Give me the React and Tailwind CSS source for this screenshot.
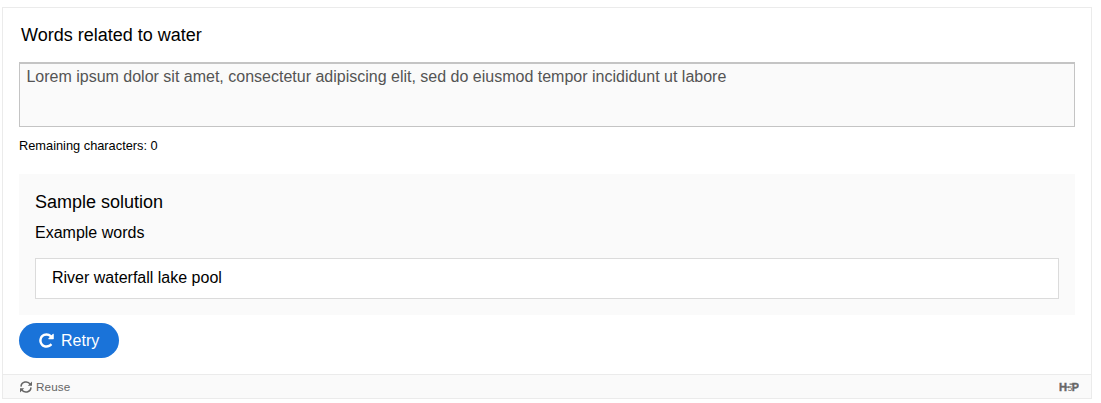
function RetryIcon() {
  return (
    <svg className="size-[17px]" viewBox="0 0 1792 1792" fill="currentColor" aria-hidden="true">
      <path d="M1664 256v448q0 26-19 45t-45 19h-448q-42 0-59-40-17-39 14-69l138-138q-148-137-349-137-104 0-198.500 40.500t-163.500 109.500-109.500 163.500-40.500 198.500 40.500 198.500 109.500 163.500 163.500 109.500 198.500 40.500q119 0 225-52t179-147q7-10 23-12 15 0 25 9l137 138q9 8 9.500 20.500t-7.500 22.500q-109 132-264 204.500t-327 72.500q-156 0-298-61t-245-164-164-245-61-298 61-298 164-245 245-164 298-61q147 0 284.500 55.500t244.500 156.500l130-129q29-31 70-14 39 17 39 59z" />
    </svg>
  );
}

function ReuseIcon() {
  return (
    <svg className="h-3 w-3" viewBox="0 0 12 12" fill="none" stroke="currentColor" strokeWidth="1.5" aria-hidden="true">
      <path d="M1 5.600A5 5 0 0 1 10.300 3.400M11 6.400A5 5 0 0 1 1.700 8.600" />
      <path d="M12 .6v4.200H7.800zM0 11.400v-4.200h4.200z" fill="currentColor" stroke="none" />
    </svg>
  );
}

function Logo() {
  return (
    <svg className="h-3 w-5" viewBox="0 0 20 12" fill="currentColor" fontFamily="Liberation Sans, sans-serif" fontWeight="700" aria-label="H5P">
      <text x="0" y="10" fontSize="11" textLength="8" lengthAdjust="spacingAndGlyphs" stroke="currentColor" strokeWidth=".4">H</text>
      <path d="M7 5.400h3v1.400H7zM10.500 2.600h4v1.200h-4z" />
      <text x="8.800" y="9.800" fontSize="7.500" fontWeight="400" textLength="4.500" lengthAdjust="spacingAndGlyphs">5</text>
      <text x="12.800" y="10" fontSize="11" textLength="7.200" lengthAdjust="spacingAndGlyphs" stroke="currentColor" strokeWidth=".4">P</text>
    </svg>
  );
}

export default function App() {
  return (
    <div className="h-[403px] w-[1101px] bg-white pt-[7px] pl-0.5 font-['Liberation_Sans',sans-serif] text-base text-black">
      <main className="flex h-[392px] w-[1090px] flex-col border border-[#ebebeb]">
        <div className="flex-1 px-4 pt-[15px]">
          <h1 className="pl-0.5 text-lg leading-6">Words related to water</h1>
          <textarea
            readOnly
            aria-label="Words related to water"
            className="mt-[15px] block h-[65px] w-full resize-none border border-t-2 border-[#c4c4c4] bg-[#fafafa] px-[6.400px] py-[3px] leading-5 text-[#545454] outline-none"
            value="Lorem ipsum dolor sit amet, consectetur adipiscing elit, sed do eiusmod tempor incididunt ut labore"
          />
          <p className="mt-2.5 text-[12.800px] leading-[18px]">Remaining characters: 0</p>
          <section className="mt-[19px] h-[141px] bg-[#fafafa] px-4 pt-4">
            <h2 className="text-lg leading-6">Sample solution</h2>
            <p className="mt-[9px] leading-5">Example words</p>
            <div className="mt-[15px] h-[41px] border border-[#dbdbdb] bg-white px-4 leading-[38px]">River waterfall lake pool</div>
          </section>
          <button className="mt-2 flex h-[35px] w-[100px] items-center gap-1.5 rounded-full bg-[#1a73d9] pl-[19px] text-white">
            <RetryIcon />
            Retry
          </button>
        </div>
        <footer className="flex h-[24px] items-center justify-between border-t border-[#ebebeb] bg-[#fafafa] pr-3 pl-[17px] text-[#666]">
          <button className="flex items-center gap-1 text-[11.700px] leading-4 tracking-[0.12px]">
            <ReuseIcon />
            Reuse
          </button>
          <Logo />
        </footer>
      </main>
    </div>
  );
}
